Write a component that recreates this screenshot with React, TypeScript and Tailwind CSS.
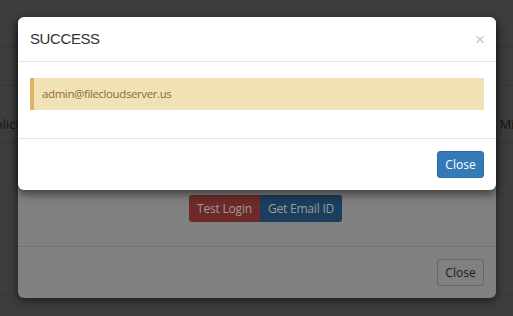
export default function App() {
  return (
    <div className="relative w-[513px] h-[316px] overflow-hidden bg-[#3d3d3d] font-['Open_Sans',sans-serif]">
      {/* page behind both overlays */}
      <div className="flex flex-col">
        <div className="h-[47px] border-b border-[#363636]" />
        <div className="h-[39px] border-b border-[#363636]" />
        <div className="h-[57px] border-b border-[#363636] flex items-end justify-between pb-[8px] text-[13px] text-[#151515]">
          <span className="-ml-[13px]">Policies</span>
          <span className="-mr-[14px]">Misc</span>
        </div>
        <div className="h-[152px] border-b border-[#363636]" />
      </div>

      {/* back modal */}
      <div className="absolute left-[18px] top-[20px] w-[478px] h-[278px] rounded-b-[6px] bg-[#808080] shadow-[0_3px_8px_rgba(0,0,0,0.5)] flex flex-col">
        <div className="flex-1 flex items-end pb-[24px] pl-[171px]">
          <button className="h-[27px] w-[71px] bg-[#6d2a29] text-[#9c9c9c] text-[12px] tracking-[-0.2px] rounded-l-[3px]">
            Test Login
          </button>
          <button className="h-[27px] w-[82px] bg-[#1b3e5d] text-[#9c9c9c] text-[12px] tracking-[-0.2px] rounded-r-[3px]">
            Get Email ID
          </button>
        </div>
        <div className="border-t border-[#727272] p-[12px] flex justify-end">
          <button className="h-[27px] w-[47px] border border-[#666666] rounded-[3px] text-[12px] text-[#1c1c1c]">
            Close
          </button>
        </div>
      </div>

      {/* front modal */}
      <div className="absolute left-[18px] top-[17px] w-[478px] bg-white rounded-[6px] shadow-[0_4px_10px_rgba(0,0,0,0.55)]">
        <div className="h-[45px] px-[12px] border-b border-[#e5e5e5] flex items-center justify-between">
          <h4 className="font-['Liberation_Sans',sans-serif] text-[15px] text-[#333333] tracking-[-0.4px]">SUCCESS</h4>
          <span className="font-['Liberation_Sans',sans-serif] text-[17px] leading-none text-[#c4c4c4] -mr-[1px]">×</span>
        </div>
        <div className="px-[12px] pt-[16px] pb-[28px]">
          <div className="h-[32px] border-l-4 border-[#e0b463] bg-[#f0e2b5] pl-[8px] flex items-center text-[11.5px] tracking-[-0.4px] text-[#8a6d3b]">
            admin@filecloudserver.us
          </div>
        </div>
        <div className="border-t border-[#e5e5e5] p-[12px] flex justify-end">
          <button className="h-[27px] w-[47px] bg-[#337ab7] border border-[#2e6da4] rounded-[3px] text-[12px] text-white">
            Close
          </button>
        </div>
      </div>
    </div>
  );
}
